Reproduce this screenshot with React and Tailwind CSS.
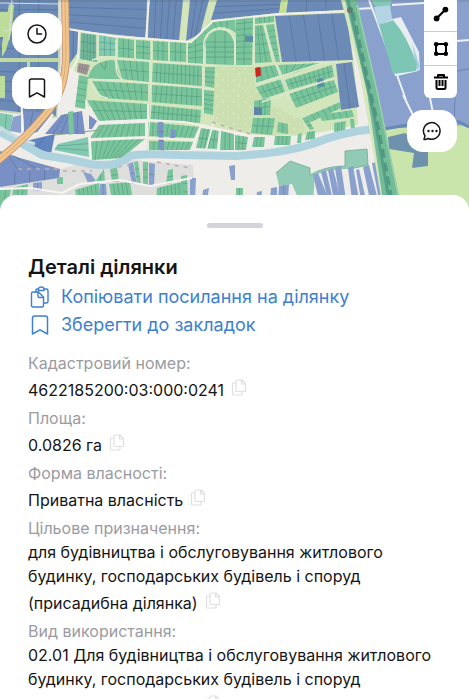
const GREEN = '#7ac49c'
const TEAL = '#83c9b2'
const BLUE = '#6c8ab6'
const INDIGO = '#8aa0cd'
const PALE = '#d2e5bb'

// A block of parcels: corners run clockwise from the top left.
function Lots({ q, cols = 1, rows = 1, fill = GREEN, line = '#3f8d72' }) {
  const [ax, ay, bx, by, cx, cy, dx, dy] = q
  const mix = (p, r, t) => p + (r - p) * t
  let d = ''
  for (let i = 1; i < cols; i++) {
    const t = i / cols
    d += `M${mix(ax, bx, t)} ${mix(ay, by, t)}L${mix(dx, cx, t)} ${mix(dy, cy, t)}`
  }
  for (let i = 1; i < rows; i++) {
    const t = i / rows
    d += `M${mix(ax, dx, t)} ${mix(ay, dy, t)}L${mix(bx, cx, t)} ${mix(by, cy, t)}`
  }
  return (
    <g>
      <polygon points={q.join(' ')} fill={fill} />
      <path d={d} fill="none" stroke={line} strokeWidth="0.6" opacity="0.75" />
    </g>
  )
}

const NAVY = '#48648c'

const fields = [
  { q: [0, 0, 58, 0, 58, 58, 0, 58], cols: 3, rows: 6, fill: BLUE, line: NAVY },
  { q: [0, 62, 58, 62, 56, 116, 0, 110], cols: 3, rows: 5, fill: BLUE, line: NAVY },
  { q: [65, 0, 147, 0, 146, 38, 65, 29], rows: 4, fill: BLUE, line: NAVY },
  { q: [149, 0, 183, 0, 179, 41, 148, 38], cols: 5, fill: BLUE, line: NAVY },
  { q: [190, 0, 209, 0, 200, 34, 186, 41], cols: 3, fill: BLUE, line: NAVY },
  { q: [217, 0, 281, 0, 279, 13, 211, 20], rows: 3, fill: BLUE, line: NAVY },
  { q: [288, 0, 345, 0, 346, 10, 286, 13], cols: 3, fill: BLUE, line: NAVY },
  { q: [275, 16, 346, 13, 353, 60, 282, 62], cols: 5, fill: BLUE, line: NAVY },
  { q: [336, 64, 352, 62, 359, 107, 341, 110], cols: 2, fill: BLUE, line: NAVY },
  { q: [68, 29, 79, 32, 78, 52, 68, 66], cols: 2, fill: BLUE, line: NAVY },
]

const village = [
  { q: [81, 33, 97, 35, 97, 62, 80, 59], cols: 5, rows: 3, fill: '#72b69b' },
  { q: [99, 35, 116, 38, 116, 56, 99, 56], cols: 3, rows: 3, fill: TEAL },
  { q: [118, 38, 134, 40, 134, 59, 118, 58], cols: 3, rows: 2 },
  { q: [136, 40, 151, 41, 151, 60, 136, 59], cols: 2, rows: 3 },
  { q: [153, 41, 168, 42, 168, 61, 153, 60], cols: 3, rows: 2 },
  { q: [170, 42, 186, 43, 186, 62, 170, 61], cols: 3, rows: 2 },
  { q: [188, 43, 203, 36, 203, 64, 188, 63], cols: 2, rows: 4 },
  { q: [236, 18, 253, 16, 252, 65, 236, 65], cols: 2, rows: 8 },
  { q: [255, 26, 263, 25, 272, 62, 255, 63], cols: 3, rows: 4 },
  { q: [255, 18, 274, 16, 274, 22, 255, 24], cols: 4 },
  { q: [266, 25, 274, 24, 280, 62, 274, 62], cols: 1, rows: 6 },
  { q: [78, 63, 90, 65, 87, 75, 77, 72], cols: 5, rows: 2, fill: '#a59b9c', line: '#776c70' },
  { q: [117, 60, 149, 62, 149, 82, 122, 79], cols: 5, rows: 2 },
  { q: [153, 63, 202, 66, 202, 86, 152, 82], cols: 12, rows: 2 },
  { q: [205, 67, 215, 67, 214, 88, 205, 86], rows: 4 },
  { q: [79, 75, 88, 77, 85, 109, 75, 107], rows: 5 },
  { q: [92, 81, 148, 84, 148, 101, 102, 98], cols: 8, rows: 2 },
  { q: [152, 85, 202, 88, 202, 106, 150, 102], cols: 10, rows: 2 },
  { q: [204, 90, 214, 91, 213, 115, 204, 113], rows: 5 },
  { q: [87, 100, 147, 104, 147, 119, 99, 121], cols: 9, rows: 2 },
  { q: [150, 105, 201, 110, 200, 123, 149, 119], cols: 11, rows: 2 },
  { q: [99, 125, 145, 123, 145, 136, 90, 138], cols: 9, rows: 1 },
  { q: [148, 122, 199, 127, 194, 138, 148, 136], cols: 10 },
  { q: [91, 141, 145, 139, 122, 158, 92, 160], cols: 9 },
  { q: [149, 141, 194, 142, 190, 150, 149, 150], cols: 9 },
  { q: [158, 122, 163, 122, 164, 151, 159, 150], rows: 3, fill: '#7d95c6', line: NAVY },
  { q: [171, 129, 176, 130, 175, 138, 170, 138], fill: '#7d95c6' },
  { q: [256, 68, 275, 65, 281, 75, 256, 83], cols: 4 },
  { q: [256, 87, 282, 79, 287, 91, 263, 99], cols: 5, rows: 2 },
  { q: [278, 65, 322, 63, 300, 71, 283, 76], cols: 5 },
  { q: [285, 80, 332, 65, 334, 77, 289, 90], cols: 10, rows: 2 },
  { q: [289, 93, 334, 80, 338, 92, 296, 108], cols: 8, rows: 2 },
  { q: [254, 101, 271, 98, 270, 115, 254, 115], cols: 3, rows: 2 },
  { q: [253, 118, 275, 118, 272, 135, 251, 133], cols: 4, rows: 2 },
  { q: [278, 122, 288, 124, 288, 134, 277, 132], cols: 2 },
  { q: [305, 117, 340, 102, 341, 108, 311, 122], cols: 6 },
  { q: [302, 118, 307, 117, 314, 129, 310, 130], rows: 3 },
  { q: [319, 115, 352, 110, 354, 117, 322, 121], cols: 5 },
  { q: [334, 123, 346, 121, 345, 131, 334, 132], cols: 3 },
  { q: [350, 119, 354, 119, 355, 128, 351, 129] },
  { q: [201, 128, 219, 131, 217, 149, 196, 148], cols: 5, rows: 2 },
  { q: [221, 131, 234, 134, 234, 150, 220, 150], cols: 3 },
  { q: [235, 135, 248, 137, 246, 150, 235, 150], cols: 3, rows: 2 },
  { q: [254, 137, 265, 137, 264, 147, 252, 147], cols: 3 },
  { q: [275, 136, 291, 136, 290, 145, 274, 145], cols: 4 },
  { q: [298, 134, 302, 133, 301, 143, 297, 143] },
  { q: [307, 132, 315, 131, 315, 139, 305, 140], cols: 3 },
  { q: [254, 107, 262, 108, 262, 115, 254, 115], fill: '#5c82a8' },
  { q: [317, 79, 323, 78, 325, 86, 318, 88], fill: '#5c8ea6' },
  { q: [245, 36, 253, 36, 253, 42, 245, 42], fill: '#5c8ea6' },
]

const south = [
  { q: [0, 151, 20, 158, 60, 169, 0, 174], cols: 3, fill: '#7890c3', line: NAVY },
  { q: [0, 172, 60, 169, 59, 178, 0, 187], cols: 4, fill: '#7890c3', line: NAVY },
  { q: [57, 177, 63, 177, 63, 184, 57, 184] },
  { q: [110, 169, 117, 167, 119, 182, 112, 182], rows: 2 },
  { q: [97, 179, 104, 169, 105, 182, 96, 181], cols: 2 },
  { q: [83, 172, 91, 174, 96, 181, 88, 183], fill: INDIGO },
  { q: [128, 164, 133, 162, 137, 184, 132, 184], fill: INDIGO, rows: 2 },
  { q: [134, 162, 138, 161, 141, 184, 137, 184], rows: 3 },
  { q: [143, 162, 148, 162, 148, 185, 143, 185], rows: 3 },
  { q: [149, 163, 155, 164, 154, 186, 149, 185], fill: INDIGO, rows: 2 },
  { q: [168, 170, 173, 169, 173, 183, 166, 184], rows: 2 },
  { q: [181, 176, 187, 175, 188, 200, 182, 200], rows: 3 },
  { q: [190, 178, 196, 178, 195, 200, 190, 200], fill: INDIGO },
  { q: [157, 188, 182, 182, 184, 200, 156, 200], cols: 7 },
  { q: [75, 190, 99, 183, 101, 200, 77, 200], cols: 6 },
  { q: [100, 184, 106, 184, 107, 200, 100, 200], fill: INDIGO, cols: 2 },
  { q: [109, 184, 130, 182, 133, 200, 112, 200], cols: 5 },
  { q: [13, 188, 28, 184, 27, 200, 12, 200], cols: 3 },
  { q: [0, 188, 11, 189, 9, 200, 0, 215], cols: 2 },
  { q: [33, 183, 42, 182, 42, 191, 33, 190], cols: 2, fill: INDIGO },
  { q: [203, 190, 209, 188, 207, 200, 202, 200], fill: INDIGO },
  { q: [229, 166, 235, 165, 235, 180, 231, 180], fill: INDIGO },
  { q: [236, 188, 243, 188, 243, 200, 236, 200], cols: 2 },
  { q: [257, 192, 262, 191, 261, 200, 256, 200], fill: INDIGO },
  { q: [271, 188, 277, 187, 277, 200, 270, 200], fill: INDIGO },
  { q: [279, 186, 289, 184, 288, 200, 278, 200], fill: INDIGO, cols: 2 },
  { q: [0, 113, 13, 115, 10, 132, 0, 128], cols: 2, fill: TEAL },
  { q: [13, 117, 21, 115, 21, 133, 10, 131], cols: 1, fill: INDIGO },
  { q: [23, 111, 53, 113, 38, 132, 24, 135], cols: 3, fill: '#7890c3', line: NAVY },
  { q: [61, 115, 82, 111, 85, 134, 45, 134], cols: 5, fill: '#7890c3', line: NAVY },
  { q: [68, 112, 73, 111, 74, 134, 69, 135] },
  { q: [89, 115, 97, 121, 92, 129, 89, 129], fill: '#7890c3' },
  { q: [34, 139, 55, 134, 51, 154, 22, 142], cols: 2, fill: '#6285c0', line: NAVY },
  { q: [58, 144, 88, 137, 89, 157, 54, 150], rows: 3, fill: TEAL },
]

const stripes = [
  [313, 175, 318, 173, 329, 200, 319, 200],
  [321, 172, 326, 170, 333, 200, 328, 200],
  [328, 170, 333, 168, 341, 200, 334, 200],
  [335, 168, 341, 166, 346, 200, 340, 200],
  [348, 168, 353, 166, 359, 200, 352, 200],
  [356, 170, 359, 169, 366, 200, 361, 200],
  [363, 167, 369, 165, 378, 200, 370, 200],
  [372, 163, 377, 162, 385, 200, 379, 200],
]

function CadastreMap() {
  return (
    <svg viewBox="0 0 469 215" preserveAspectRatio="xMidYMin slice" className="block h-full w-full" aria-hidden="true">
      <defs>
        <pattern id="trees" width="11" height="11" patternUnits="userSpaceOnUse">
          <rect width="11" height="11" fill="#cbdfb0" />
          <circle cx="3" cy="3" r="0.9" fill="#dcebc8" />
          <circle cx="8" cy="8" r="0.9" fill="#dcebc8" />
        </pattern>
      </defs>
      <rect width="469" height="215" fill="#efede9" />
      <polygon points="0,0 60,0 60,70 57,118 0,112" fill="#c3d6b3" />
      <polygon points="65,0 346,0 354,62 358,125 300,136 250,134 200,126 190,150 149,150 149,104 76,107 80,75 68,66" fill={PALE} />
      {fields.map((f, i) => <Lots key={i} {...f} />)}
      <path d="M0 12H8L5 37H0ZM9 4L14 5L12 30L6 50L2 57V44ZM0 59H58V62L30 62V68H27V62H0ZM0 76H5V98H0Z" fill="#bcdc9a" />
      <path d="M59 0V28M0 3L58 4M12 0L9 40M3 31L14 29" stroke="#d8ddd4" strokeWidth="1.2" fill="none" />

      <polygon points="214,67 255,67 255,85 276,108 302,120 306,132 278,136 250,134 214,121" fill="url(#trees)" />
      <path d="M194 41L213 22L235 17L236 33Q219 20 207 34L203 62L195 62Z" fill={GREEN} />
      <path d="M206 64V42Q209 30 220 30Q231 30 234 43V65Z" fill={GREEN} />
      <path d="M206 42H234M206 47H234M206 52H234M206 57H234M215 32V64M225 31V64M213 22L217 29M220 21L222 28M227 19L227 29M204 31L209 35M198 38L205 42" stroke="#3f8d72" strokeWidth="0.6" opacity="0.75" />
      <path d="M88 79Q91 60 114 60L121 79Z" fill={GREEN} />
      <path d="M100 63L105 70M106 61L105 69" stroke="#3f8d72" strokeWidth="0.6" />
      {village.map((l, i) => <Lots key={i} {...l} />)}
      <path d="M204 64V42Q207 29 220 29Q233 29 235 43V65" fill="none" stroke="#dfe9d2" strokeWidth="1.6" />
      <path d="M92 60L99 58Q112 56 150 61L215 65.500M151 41V104L147 151M203 64V108M89 79L150 83L214 89M116 40V62Q115 76 123 80M91 81Q95 97 108 98M97 34V60M254 16L254 66M264 23L275 62L289 100M256 84L322 63L352 61M262 102L334 78" fill="none" stroke="#dde8cf" strokeWidth="1.5" />
      <path d="M68 29L112 36L191 42L213 21L278 14L346 11M79 32L78 58L68 78M86 100L88 118L91 160M86 109Q95 124 103 122L146 120L184 122L201 125L190 152M60 148Q90 137 146 138L195 140M201 125L250 136M213 124L206 150M220 130L218 150M146 38L149 0" fill="none" stroke="#f3f0ea" strokeWidth="1.800" />
      <path d="M255.500 68L260 67.500L260.500 75.500L256 76.500Z" fill="#d6221f" stroke="#b81f1c" strokeWidth="0.6" />

      <path d="M0 185L57 170L75 165L130 160L193 165L197 215H0Z" fill="#dededd" />
      <path d="M55 135L100 130" stroke="#8ba88a" strokeWidth="1" />
      {south.map((l, i) => <Lots key={i} {...l} />)}
      <path d="M21 95L23 131M0 189L30 188L62 193L80 184L120 180L150 186L192 178M53 114L37 134L20 140" fill="none" stroke="#f7f5f1" strokeWidth="2" />
      <path d="M18 169H60M63 171H92M118 167L130 165M157 162L190 168M212 122L250 134" fill="none" stroke="#c3aab1" strokeWidth="1.500" strokeDasharray="4 5" />

      <path d="M0 132Q22 143 42 155Q70 159 90 164Q118 168 130 156Q138 153 180 155L235 156Q285 153 312 144Q342 132 374 129" fill="none" stroke="#aed3df" strokeWidth="8" />
      <path d="M0 127Q12 137 35 144" fill="none" stroke="#c6dde2" strokeWidth="3" />

      <path d="M65 -2L66 55Q66 93 44 116Q25 139 -4 162" fill="none" stroke="#c49a78" strokeWidth="8" />
      <path d="M65 -2L66 55Q66 93 44 116Q25 139 -4 162" fill="none" stroke="#f2c58c" strokeWidth="6" />
      <path d="M65 -2L66 55Q66 93 44 116Q25 139 -4 162" fill="none" stroke="#d8a373" strokeWidth="0.8" />
      <path d="M60 0L61 56Q61 85 43 108" fill="none" stroke="#dfe2df" strokeWidth="1.500" />

      <path d="M276 173L290 161L310 168V175Q325 166 345 166V151L367 149L368 165L350 169Q330 168 315 175L313 200H299L292 184L279 186Z" fill="#91cbb5" />
      <path d="M276 173L290 161L310 168V175Q325 166 345 166V151L367 149L368 165L350 169" fill="none" stroke="#70aa91" strokeWidth="0.800" />
      {stripes.map((q, i) => <Lots key={i} q={q} fill={INDIGO} />)}

      <polygon points="355,0 469,0 469,128 380,129" fill={INDIGO} />
      <path d="M357 9L372 8M369 0L397 75L406 100M392 5L424 3M397 75L418 70M457 41L469 40M403 95L413 115M430 98L433 113" fill="none" stroke="#eef1f4" strokeWidth="2" />
      <path d="M457 71L469 69M455 98L454 126" stroke="#6179a8" strokeWidth="0.7" />
      <path d="M371 0H392L390 5L376 7Z" fill="#83c9b6" />
      <path d="M374 7L390 5L392 19L378 25Z" fill="#b3d5e3" />
      <path d="M392 19L401 17L419 52L420 70L395 76L379 25Z" fill="#e7edf0" />
      <path d="M412 42L420 67L417 71Z" fill="#a9cfe5" />
      <path d="M379 25L393 20Q407 36 417 64L416 71L393 74Z" fill="#7dc5b5" />

      <polygon points="379,129 469,125 469,215 400,215" fill="#cae5ac" />
      <path d="M384 129L407 125M457 121L469 127" fill="none" stroke="#6788b6" strokeWidth="3" />
      <path d="M388 137L405 133L428 151L428 166L412 168L414 153L389 149Z" fill="#6e91ad" />

      <path d="M341 0H348L365 65L391 215H384L360 75Z" fill="#d6e7be" />
      <path d="M345 0L357 0L378 95L403 215H385L367 92Z" fill="#73bc98" />
      <path d="M348 0L374 115L390 205" fill="none" stroke="#549f86" strokeWidth="3" />
      <path d="M353 12L378 125L393 205" fill="none" stroke="#418376" strokeWidth="3" strokeDasharray="9 5" opacity="0.6" />
      <path d="M357 5L378 95L399 200" fill="none" stroke="#9bd1ad" strokeWidth="1.500" />
      <path d="M281 0L287 0L285 13L280 13Z" fill="#c5e18e" />
      <circle cx="350" cy="10" r="3" fill="#637c70" />
      <rect width="469" height="2" fill="#55636b" opacity="0.2" />
    </svg>
  )
}

function ClipboardIcon() {
  return (
    <svg viewBox="0 0 20 22" className="h-[22px] w-5" fill="none" stroke="currentColor" strokeWidth="1.4" strokeLinejoin="round" strokeLinecap="round" aria-hidden="true">
      <path d="M6 6V4Q6 3 7 3H8.500M14 3H16.500Q18 3 18 4.500V15.500Q18 17 16.500 17H14" />
      <path d="M8.500 4.500V2.500Q9 1 11.300 1T14 2.500V4.500Z" />
      <path d="M3 6H8.500L13.500 11V19.500Q13.500 21 12 21H3Q1.500 21 1.500 19.500V7.500Q1.500 6 3 6Z" />
      <path d="M8 6V10Q8 11.500 9.500 11.500H13.500" />
    </svg>
  )
}

function BookmarkIcon({ className }) {
  return (
    <svg viewBox="0 0 18 20" className={className} fill="none" stroke="currentColor" strokeWidth="1.5" strokeLinejoin="round" aria-hidden="true">
      <path d="M1.500 19V3Q1.500 1 3.500 1H14.500Q16.500 1 16.500 3V19L9 14.800Z" />
    </svg>
  )
}

function CopyButton() {
  return (
    <button type="button" aria-label="Копіювати" className="ml-[7px] inline-block h-8 w-4 align-[-11px] text-[#e0e0e0]">
      <svg viewBox="0 0 16 32" className="h-8 w-4" fill="none" stroke="currentColor" strokeWidth="1.2" strokeLinejoin="round" aria-hidden="true">
        <path d="M6 5H11L14.500 8.500V16.500H6Q5 16.500 5 15.500V6Q5 5 6 5ZM10.500 5V9H14.500" />
        <path d="M5 8H2.500Q1.500 8 1.500 9V19Q1.500 20 2.500 20H10Q11 20 11 19V16.500" />
      </svg>
    </button>
  )
}

const details = [
  ['Кадастровий номер:', '4622185200:03:000:0241'],
  ['Площа:', '0.0826 га'],
  ['Форма власності:', 'Приватна власність'],
  ['Цільове призначення:', 'для будівництва і обслуговування житлового будинку, господарських будівель і споруд (присадибна ділянка)'],
  ['Вид використання:', '02.01 Для будівництва і обслуговування житлового будинку, господарських будівель і споруд (присадибна ділянка)'],
]

const floating = 'flex h-[42px] w-[50px] items-center justify-center rounded-2xl bg-white text-[#151515]'
const linkIcon = 'flex w-[23px] shrink-0 justify-center'

export default function App() {
  return (
    <main className="flex h-screen flex-col overflow-hidden bg-white font-['Inter','Noto_Sans',sans-serif] text-base text-[#151515]">
      <section aria-label="Кадастрова карта" className="relative h-[215px] shrink-0 overflow-hidden">
        <CadastreMap />
        <div className="absolute top-[13px] left-3 flex flex-col gap-3">
          <button type="button" aria-label="Історія" className={floating}>
            <svg viewBox="0 0 20 20" className="h-5 w-5" fill="none" stroke="currentColor" strokeWidth="1.5" strokeLinecap="round" strokeLinejoin="round" aria-hidden="true">
              <circle cx="10" cy="10" r="9" />
              <path d="M10 4.500V10H14.500" />
            </svg>
          </button>
          <button type="button" aria-label="Закладки" className={floating}>
            <BookmarkIcon className="h-5 w-[18px]" />
          </button>
        </div>
        <div className="absolute top-0 right-3 flex flex-col items-end gap-3">
          <div className="flex w-[33px] flex-col divide-y divide-[#cccccc] overflow-hidden rounded-b-md bg-white text-black">
            <button type="button" aria-label="Лінія" className="flex h-8 w-full items-start justify-center pt-1.5">
              <svg viewBox="0 0 16 16" className="h-4 w-4" aria-hidden="true">
                <path d="M3.500 12.500L12.500 3.500" stroke="currentColor" strokeWidth="2.200" />
                <circle cx="3.600" cy="12.400" r="2.900" fill="currentColor" />
                <circle cx="12.400" cy="3.600" r="2.900" fill="currentColor" />
              </svg>
            </button>
            <button type="button" aria-label="Полігон" className="flex h-[34px] w-full items-center justify-center">
              <svg viewBox="0 0 16 16" className="h-4 w-4" fill="currentColor" aria-hidden="true">
                <rect x="3" y="3" width="10" height="10" fill="none" stroke="currentColor" strokeWidth="2" />
                <circle cx="3.200" cy="3.200" r="2.300" />
                <circle cx="12.800" cy="3.200" r="2.300" />
                <circle cx="3.200" cy="12.800" r="2.300" />
                <circle cx="12.800" cy="12.800" r="2.300" />
              </svg>
            </button>
            <button type="button" aria-label="Видалити" className="flex h-8 w-full items-center justify-center">
              <svg viewBox="0 0 16 18" className="h-[18px] w-4" fill="none" stroke="currentColor" strokeWidth="2" strokeLinejoin="round" aria-hidden="true">
                <path d="M1 4.500H15M5 4V2H11V4M3.500 7V14.500Q3.500 16 5 16H11Q12.500 16 12.500 14.500V7M6.500 7V13M9.500 7V13" />
              </svg>
            </button>
          </div>
          <button type="button" aria-label="Чат" className={floating}>
            <svg viewBox="0 0 20 20" className="h-5 w-5" fill="none" stroke="currentColor" strokeWidth="1.5" strokeLinejoin="round" aria-hidden="true">
              <path d="M2 18.500L3 14.800A8.300 8.300 0 1 1 6.300 17.500Q4 18.700 2 18.500Z" />
              <g fill="currentColor" stroke="none">
                <circle cx="6.500" cy="10" r="1.200" />
                <circle cx="10.500" cy="10" r="1.200" />
                <circle cx="14.500" cy="10" r="1.200" />
              </g>
            </svg>
          </button>
        </div>
      </section>

      <section className="relative -mt-5 min-h-0 flex-1 overflow-hidden rounded-t-2xl bg-white px-7">
        <div className="mx-auto mt-7 h-[5px] w-14 rounded-full bg-[#d3d3da]" />
        <h1 className="mt-[25px] text-xl leading-7 font-semibold">Деталі ділянки</h1>
        <nav className="mt-0.5 flex flex-col text-lg leading-7 text-[#3d7fd0]">
          <a href="#copy" className="flex items-center gap-2.5">
            <span className={linkIcon}>
              <ClipboardIcon />
            </span>
            Копіювати посилання на ділянку
          </a>
          <a href="#bookmark" className="flex items-center gap-2.5">
            <span className={linkIcon}>
              <BookmarkIcon className="h-5 w-[18px]" />
            </span>
            Зберегти до закладок
          </a>
        </nav>
        <dl className="mt-[13px] leading-6">
          {details.map(([label, value]) => (
            <div key={label}>
              <dt className="leading-[23px] text-[#9b9ba2]">{label}</dt>
              <dd>
                {value}
                <CopyButton />
              </dd>
            </div>
          ))}
        </dl>
      </section>
    </main>
  )
}
